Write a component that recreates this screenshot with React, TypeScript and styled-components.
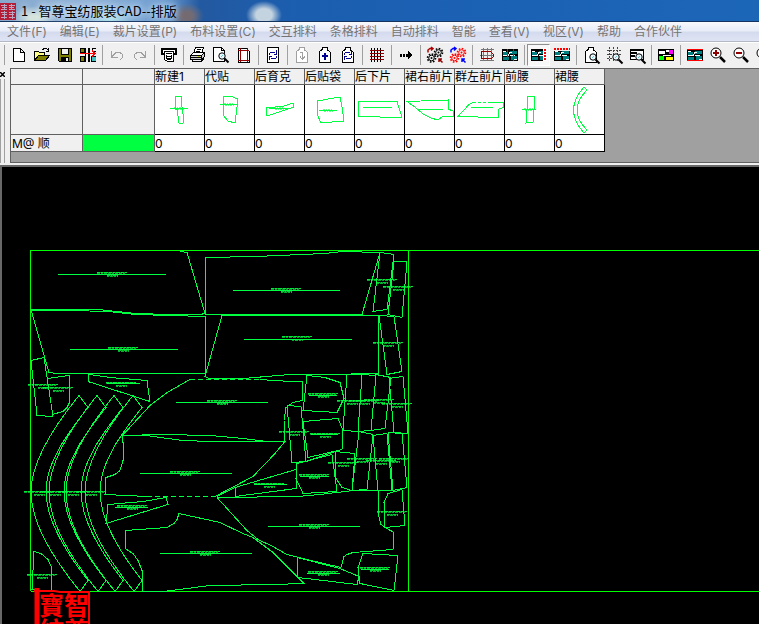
import React from "react";
import styled, { createGlobalStyle } from "styled-components";

const Global = createGlobalStyle`
  *{box-sizing:border-box}
  body{margin:0;background:#000;font:12px/16px Inter,"Noto Sans CJK SC",sans-serif;overflow:hidden}
`;
const Window = styled.div`display:flex;flex-direction:column;height:100vh;overflow:hidden;`;
const TitleBar = styled.header`
  display:flex;align-items:center;gap:5px;height:22px;flex:none;border-bottom:1px solid #14335f;color:#000;
  background:
    radial-gradient(ellipse 17px 13px at 187px 16px,#746b72 30%,transparent),
    radial-gradient(ellipse 18px 14px at 264px 15px,#c3d3df 45%,transparent),
    radial-gradient(ellipse 24px 10px at 110px 19px,#a4dce8 10%,transparent),
    radial-gradient(ellipse 22px 12px at 34px 18px,#d5e3dc 20%,transparent),
    linear-gradient(90deg,#86a9cd 0,#8fb2d8 90px,#6c9cd0 165px,#2359a0 200px,#1b5eb0 300px,#1c66b8 100%);
`;
const Title = styled.h1`margin:0;font:400 13px/20px "Noto Sans CJK SC",sans-serif;white-space:nowrap;text-shadow:0 0 6px #dcecff,0 0 8px #dcecff;`;
const MenuBar = styled.nav`
  display:flex;gap:13px;padding:0 7px;height:20px;flex:none;align-items:center;white-space:nowrap;
  background:linear-gradient(#f8f9fd 0,#e9edf8 45%,#d5dbee 55%,#dfe4f4 100%);border-bottom:1px solid #b4b7c4;
`;
const MenuItem = styled.button`
  border:0;padding:0;background:none;color:#747474;font:inherit;line-height:18px;
`;
const ToolBar = styled.div`
  display:flex;align-items:center;height:26px;flex:none;padding:0 0 1px 3px;background:#f0f0f0;border-top:1px solid #fff;overflow:hidden;
`;
const Grip = styled.span`width:2px;height:20px;margin-right:2px;flex:none;border-right:1px solid #a0a0a0;`;
const Tool = styled.button<{ $on?: boolean }>`
  display:flex;align-items:center;justify-content:center;width:23px;height:22px;flex:none;padding:0;
  border:1px solid;border-color:${p => (p.$on ? "#909090 #fff #fff #909090" : "transparent")};
  background:${p => (p.$on ? "#f8f8f8" : "none")};
  svg{display:block;overflow:visible}
`;
const Sep = styled.span`width:6px;height:20px;flex:none;display:flex;justify-content:center;
  &::before{content:"";width:1px;background:#a0a0a0}`;
const Panel = styled.section`display:flex;height:95px;flex:none;background:#f0f0f0;`;
const Dock = styled.div`width:10px;flex:none;display:flex;flex-direction:column;`;
const CloseBtn = styled.button`border:0;background:none;padding:2px 0 0 0;width:6px;height:11px;svg{display:block}`;
const DockGrip = styled.span`width:5px;flex:1;border:solid #a0a0a0;border-width:0 1px;`;
const Sheet = styled.div`flex:1;min-width:0;background:#a0a0a0;border:1px solid #606060;border-width:1px 0 1px 1px;overflow:hidden;`;
const Grid = styled.table`border-collapse:separate;border-spacing:0;table-layout:fixed;width:594px;`;
const Cell = styled.td<{ $kind: "head" | "pic" | "val" | "side" | "swatch" }>`
  padding:0;padding-left:${p => (p.$kind === "side" ? "1px" : "0")};
  overflow:hidden;white-space:nowrap;text-align:left;font-weight:400;line-height:15px;
  vertical-align:${p => (p.$kind === "pic" ? "top" : "middle")};
  height:${p => (p.$kind === "pic" ? "50px" : p.$kind === "head" ? "16px" : "17px")};
  border-right:1px solid ${p => (p.$kind === "pic" || p.$kind === "val" ? "#000" : "#606060")};
  border-bottom:1px solid ${p => (p.$kind === "pic" || p.$kind === "val" ? "#000" : "#606060")};
  background:${p => (p.$kind === "pic" || p.$kind === "val" ? "#fff" : p.$kind === "swatch" ? "#00ff40" : "#f0f0f0")};
  svg{display:block}
`;
const Col = styled.col<{ $w: number }>`width:${p => p.$w}px;`;
const Stage = styled.main`
  flex:1;min-height:0;background:#000;border:solid #686868;border-width:2px 0 0 2px;
  svg{display:block;width:100%;height:100%}
`;
const Gap = styled.div`height:2px;flex:none;background:#f0f0f0;`;
const Green = styled.g`fill:none;stroke:#00ff40;stroke-width:1px;shape-rendering:crispEdges;`;
const Seal = styled.text`font:700 25px "Noto Sans CJK TC",serif;fill:#f00;`;

const K = "#000";
const Teal = ({ red }: { red: string }) => (
  <>
    <path fill={K} d="M0 2h16v12H0z" />
    <path fill="#008080" d="M1 5h5v3H1zM8 4h7v3H8zM1 10h6v3H1zM9 9h6v4H9z" />
    <path stroke="#fff" fill="none" d="M1 8.5h5l2-3h2M8 8.5h5M1 4.5h3M12 12.5h3" />
    {red && <path stroke="#f00" fill="none" d={red} />}
  </>
);
const Lens = ({ x = 8, y = 8 }: { x?: number; y?: number }) => (
  <g transform={`translate(${x} ${y})`} shapeRendering="auto">
    <circle cx="2" cy="2" r="3.2" fill="#e8f8ff" stroke={K} />
    <path d="M4.5 4.5l4 4" stroke={K} strokeWidth="2" />
    <path d="M1 3l2-2" stroke="#6cc" />
  </g>
);
const Leaf = ({ c = K }: { c?: string }) => <path fill="#fff" stroke={c} d="M2.500 4.500L5 2.500V.5h5v2l3.500 3v10h-11z" />;
const Gears = ({ a, b, c }: { a: string; b: string; c: string }) => (
  <g shapeRendering="auto">
    {[[4.5, 11], [11.5, 5.5]].map(([x, y]) => (
      <g key={x} fill="none" stroke={a}>
        <circle cx={x} cy={y} r="4" strokeWidth="1.600" strokeDasharray="1.600 1.500" />
        <circle cx={x} cy={y} r="2.800" />
        <circle cx={x} cy={y} r="1" fill={a} stroke="none" />
      </g>
    ))}
    <path fill="none" stroke={b} strokeWidth="1.500" d="M1 5.500V3l2-1.500h2.500M4 0l2 1.500L4 3.500" />
    <path fill="none" stroke={c} strokeWidth="1.500" d="M15.500 15.500l-3-3M12 15v-3h3" />
  </g>
);
const Cycle = ({ c }: { c: string }) => (
  <g fill="none" stroke={c}>
    <path d="M5 5.500h5M4.500 6v2M11.500 3v4M9 7.500h3M6 11.500h5M11.500 9v2M4.500 9v4M4 9.500h3" />
  </g>
);

const icons: Record<string, React.ReactNode> = {
  新建: <path fill="#fff" stroke={K} d="M2.500 1.500h7l4 4v9h-11zM9.500 1.500v4h4" />,
  打开: (
    <>
      <path fill="#ff8" stroke={K} d="M.5 13.500v-9h4l1 1h5v3" />
      <path fill="#808000" stroke={K} d="M.5 13.500l4-5h11l-4 5z" />
      <path fill="none" stroke={K} d="M8.500 2.500l2-1h2l2 2M14.500 1v3h-3" />
    </>
  ),
  保存: (
    <>
      <path fill="#808000" stroke={K} d="M1.500 1.500h13v13h-12l-1-1z" />
      <path fill="#f0f0f0" stroke={K} d="M4.500 1.500h7v6h-7z" />
      <path fill={K} d="M4 10h8v5H4z" /><path fill="#f0f0f0" d="M9 11h2v3H9z" />
    </>
  ),
  对齐: (
    <>
      <path fill="#808000" stroke={K} d="M.5 1.500h4v4h-4zM.5 9.500h4v5h-4z" />
      <path fill="none" stroke={K} d="M5.500 1v14M8.500 1v14M9.500 1v14M15.500 1.500h-3v3h3" />
      <path fill="#40c0c0" d="M11 9h5v5h-5z" /><path fill="none" stroke={K} d="M15.500 9.500h-4v5h4" />
      <path stroke="#f00" fill="none" d="M0 6.500h15M12 3.500l3 3-3 3" />
    </>
  ),
  撤销: <path fill="none" stroke="#a0a0a0" d="M2.500 4v6h6M3 9.500l4-4h4l2.500 2v3l-3 3" />,
  重做: <path fill="none" stroke="#a0a0a0" d="M13.500 4v6h-6M13 9.500l-4-4H5l-2.500 2v3l3 3" />,
  绘图: (
    <>
      <path fill="#fff" stroke={K} strokeWidth="2" d="M1 2h14v5H1z" />
      <path fill="#fff" stroke={K} d="M3.500 4.500h9v10h-6l-3-2z" />
      <path fill="none" stroke={K} d="M5 6.500h6M5.500 8v3h5V8M6 9.500h4M6 12.500h4" />
    </>
  ),
  打印: (
    <>
      <path fill="#fff" stroke={K} d="M5.500.5h8l-2 6h-8z" />
      <path fill="none" stroke={K} d="M7 2.500h4M6 4.500h4" />
      <path fill="#fff" stroke={K} d="M.5 8.500l3-3h11l-3 3z" />
      <path fill="#ccc" stroke={K} d="M.5 8.500h11v4H.5zM11.500 8.500l3-3v4l-3 3" />
      <path fill="none" stroke={K} d="M2 12.500l1 2h8l3-3M1 10.500h10" /><path fill="#cc0" d="M8 9h2v1H8z" />
    </>
  ),
  预览: (
    <>
      <path fill="#fff" stroke={K} d="M.5.5h8l3 3v11H.5z" />
      <path fill="none" stroke={K} d="M8.500.5v3h3" /><Lens x={7} y={7} />
    </>
  ),
  页面: (
    <>
      <path fill="#fff" stroke={K} d="M2.500 1.500h8l3 3v11h-11z" />
      <path fill="none" stroke="#900000" d="M4.500 1v14M11.500 1v14M2 3.500h11M2 13.500h11" />
    </>
  ),
  刷新: <><path fill="#fff" stroke={K} d="M2.500.5h11v15h-11z" /><Cycle c="#000090" /></>,
  下页: <><Leaf c="#a0a0a0" /><path fill="none" stroke="#a0a0a0" d="M6 5.500h2.500V12M6 9.500l2.500 3 2.500-3" /></>,
  加页: <><Leaf /><path fill="none" stroke="#000090" strokeWidth="2" d="M8 6v7M5 9h6" /></>,
  换页: <><Leaf /><Cycle c="#000090" /></>,
  网格: <><path stroke={K} d="M2.500 1v14M5.500 1v14M8.500 1v14M11.500 1v14" /><path stroke="#900000" d="M1 3.500h14M1 6.500h14M1 9.500h14M1 12.500h14" /></>,
  箭头: <><path stroke={K} strokeWidth="3" strokeDasharray="2 1" d="M2 8h8" /><path fill={K} d="M10 4l5 4-5 4z" /></>,
  齿轮: <Gears a={K} b="#b00000" c="#900000" />,
  自动: <Gears a="#f00" b="#00f" c="#00f" />,
  框格: <><path stroke="#777" d="M2 2.500h13M4.500 1v13M8.500 1v13M12.500 1v13M1 13.500h14M1 8.500h14" /><path fill="none" stroke="#900000" d="M2.500 4.500h9l3 3v2l-2 2h-10z" /></>,
  排图一: <Teal red="M5.500 2v12M11.500 2v12" />,
  排图二: <><Teal red="" /><path fill="#fff" d="M12 1h4v13h-4z" /><path stroke="#f00" strokeWidth="2" strokeDasharray="2 1" d="M14 2v12" /></>,
  排图三: <><Teal red="" /><path fill="#f0f0f0" d="M0 1h16v3H0z" /><path stroke="#f00" strokeWidth="2" strokeDasharray="2 1" d="M0 2h16" /></>,
  查片: <><Leaf /><Lens /></>,
  查格: <><path stroke="#444" strokeDasharray="2 1" d="M1 3.500h14M1 7.500h14M1 11.500h9M3.500 0v14M7.500 0v14M11.500 0v14" /><Lens /></>,
  查表: <><path fill="#fff" stroke={K} d="M1.500 2.500h13v10h-13z" /><path stroke={K} strokeWidth="2" d="M1 3h14M2 6h6M2 9h4" /><Lens /></>,
  颜色: <><path fill={K} d="M0 2h16v12H0z" /><path fill="#fff" d="M1 4h6v3H1zM8 3h3v2H8z" /><path fill="#f0f" d="M11 3h4v4h-4z" /><path fill="#0f0" d="M1 9h5v4H1z" /><path fill="#ff0" d="M8 10h7v3H8z" /><path stroke="#fff" d="M5 8.500h8" /></>,
  排图四: <Teal red="M0 2.500h16M0 13.500h16" />,
  放大: <g shapeRendering="auto"><circle cx="6" cy="6" r="5" fill="#fff" stroke={K} /><path stroke={K} strokeWidth="2.500" d="M10 10l5 5" /><path stroke="#900000" strokeWidth="2" d="M3 6h6M6 3v6" /></g>,
  缩小: <g shapeRendering="auto"><circle cx="6" cy="6" r="5" fill="#fff" stroke={K} /><path stroke={K} strokeWidth="2.500" d="M10 10l5 5" /><path stroke="#900000" strokeWidth="2" d="M3 6h6" /></g>,
  全图: <g shapeRendering="auto"><circle cx="6" cy="6" r="5" fill="#fff" stroke={K} /><path stroke={K} strokeWidth="2.500" d="M10 10l5 5" /></g>,
};
const groups = [
  ["新建", "打开", "保存", "对齐"], ["撤销", "重做"], ["绘图"], ["打印", "预览", "页面"], ["刷新"], ["下页", "加页", "换页"],
  ["网格"], ["箭头"], ["齿轮", "自动"], ["框格", "排图一"], ["排图二", "排图三"], ["查片", "查格", "查表"], ["颜色"],
  ["排图四", "放大", "缩小", "全图"],
];
const menus = ["文件(F)", "编辑(E)", "裁片设置(P)", "布料设置(C)", "交互排料", "条格排料", "自动排料", "智能", "查看(V)", "视区(V)", "帮助", "合作伙伴"];

const Scribble = ({ x, y, w = 30 }: { x: number; y: number; w?: number }) => (
  <>
    <path opacity=".5" d={`M${x - w / 2} ${y + 0.5}h${w}M${x - 5} ${y + 3.5}h11`} />
    <path opacity=".8" strokeDasharray="3 1 2 1 4 1" d={`M${x - w / 2} ${y + 0.5}h${w}`} />
    <path opacity=".65" strokeDasharray="3 1 2 1 3 1" d={`M${x - w / 2} ${y + 1.5}h${w - 2}`} />
    <path opacity=".7" strokeDasharray="2 1 3 1" d={`M${x - 5} ${y + 4.5}h11`} />
    <path opacity=".6" strokeDasharray="3 1 1 1" d={`M${x - 5} ${y + 3.5}h11`} />
  </>
);
const Smudge = ({ x, y, w }: { x: number; y: number; w: number }) => (
  <>
    <path d={`M${x - w / 2} ${y + 0.5}h${w}`} />
    <path opacity=".6" strokeDasharray="2 1 1 1" d={`M${x - 5} ${y - 0.5}h10M${x - 4} ${y + 1.5}h10`} />
  </>
);

const pieces: { name: string; art: React.ReactNode }[] = [
  { name: "新建1", art: <><path d="M20 11h6l1 11 2 14-1 2h-4l-2-14h-2z" /><Smudge x={24} y={23} w={18} /></> },
  { name: "代贴", art: <><path d="M18 11h7l8 3-3 24-7-2-5-6z" /><Smudge x={24} y={19} w={18} /></> },
  { name: "后育克", art: <><path d="M11 23l18-2 9-3 1 4-27 9z" /><Smudge x={24} y={23} w={20} /></> },
  { name: "后贴袋", art: <><path d="M12 16l23-4 2 10 2 14-23 2-4-9z" /><Smudge x={23} y={25} w={18} /></> },
  { name: "后下片", art: <path d="M3 16.500h39l5 16-44-1zM8 22.500h29" /> },
  { name: "裙右前片", art: <path d="M2 16.500L43 15v9l5 2v5h-10l-5 4-7-2-8-4-8-7zM13 24.500h25" /> },
  { name: "群左前片", art: <><path d="M18 17.500l-4 2-11 12 40 1v-8l5-2v-5h-13M16 22.500h22" /><path strokeDasharray="3 2" d="M18 17.500h17" /></> },
  { name: "前腰", art: <><path d="M22 11l8 1-1 12-1 13-7 1 1-13z" /><Smudge x={24} y={24} w={14} /></> },
  { name: "裙腰", art: <path d="M29 2Q8 25 29 48l3-3Q12 25 32 5z" /> },
];

const outlines = [
  "180,251 187,252 205,313 200,314 170,314 135,313 117,311 98,309 31,309",
  "31,309 49,372 57,373 205,373 205,316 170,315 135,314 108,311 70,310 31,310",
  "31,360 44,357 53,416 37,415 31,360",
  "48,378 69,375 69,403 67,407 63,411 52,414",
  "90,374 88,374 88,381 150,401 147,380 110,377 90,374",
  "34,551 41,553 48,559 52,568 51,591 32,589 34,551",
  "205,314 205,257 256,256 325,253 343,251 380,252 362,314 205,314",
  "380,252 394,254 387,309 373,311 380,252",
  "394,261 407,261 402,317 388,314 394,261",
  "222,315 378,315 378,373 325,374 290,374 243,378 209,378 205,376 222,315",
  "379,315 394,316 402,371 387,374 379,315",
  "260,379 273,380 292,381 302,381 302,400 293,402 286,407 284,420 284,427 285,441 267,441 243,438 210,435 163,434 122,435 127,430 150,405 167,392 190,379",
  "122,435 147,435 160,437 183,440 210,441 285,441 275,453 253,476 215,496",
  "147,496 127,495 105,494 106,477 115,474 120,470 123,460 123,442 122,435",
  "108,504 143,501 166,497 168,504 106,523 108,504",
  "125,530 167,527 174,523 177,519 179,513 220,522 243,533 253,537 273,552 304,583 273,584 210,585 187,588 163,591 142,591 142,570 138,560 133,553 125,548 125,530",
  "217,497 298,496 320,494 353,490 378,490 378,513 381,524 387,528 394,532 393,549 353,552 347,554 344,556 341,567 311,560 287,554 273,546 258,539 247,530 217,497",
  "297,557 298,577 357,584 359,576 340,568 297,557",
  "363,553 398,555 394,590 360,583 358,567 363,553",
  "217,496 235,487 296,469 296,488 235,496 235,487",
  "297,463 332,454 337,491 303,493 296,478 297,463",
  "307,375 325,377 340,382 344,398 337,412 303,410 307,375",
  "303,421 338,418 343,430 342,449 308,457 303,421",
  "287,405 301,406 306,461 292,462 287,405",
  "347,374 362,374 358,431 343,430 347,374",
  "362,374 376,375 371,430 358,431 362,374",
  "376,374 391,377 385,428 371,430 376,374",
  "389,378 403,376 408,433 394,432 389,378",
  "306,461 335,451 355,453 352,490 342,487 336,478 335,451",
  "359,431 373,434 367,489 352,490 359,431",
  "373,435 387,433 392,490 378,490 373,435",
  "388,432 402,433 407,487 393,490 388,432",
  "402,489 405,525 385,527 384,502 388,493 402,489",
];
const grains = [
  [58, 166, 274], [70, 178, 349], [233, 340, 290], [244, 352, 339], [176, 268, 402], [140, 232, 473], [160, 252, 553],
  [268, 360, 526], [307, 340, 573], [254, 287, 484], [107, 140, 383], [115, 148, 507], [300, 329, 476], [309, 337, 395], [311, 338, 434], [361, 389, 569],
];
const notes = [
  [112, 272], [123, 347], [121, 382], [43, 384], [58, 387], [286, 288], [382, 279], [398, 286], [297, 336], [388, 342],
  [222, 400], [323, 393], [352, 400], [364, 400], [379, 399], [397, 403], [294, 431], [325, 433], [343, 462], [362, 458],
  [381, 460], [394, 458], [314, 474], [269, 483], [314, 524], [392, 511], [375, 567], [323, 571], [185, 471], [132, 505],
  [205, 551], [42, 574], [39, 491], [55, 491], [73, 491], [91, 491],
];
const waist = "M79 395C53 427 31 462 31 491C31 524 55 560 80 591L88 580C66 552 46 520 46 491C46 462 66 435 88 407Z";

export default function App() {
  return (
    <Window>
      <Global />
      <TitleBar>
        <svg width="16" height="18" viewBox="0 0 16 18" aria-hidden="true">
          <path fill="#b51c36" d="M0 1h16v17H0z" />
          <path fill="none" stroke="#b9a6c0" d="M1 3.500h6M2 5.500h5M4.500 2v6M1 7.500h6M9 3.500h6M9 5.500h5M11.500 2v6M9 7.500h6M1 10.500h6M2 12.500h5M4.500 9v8M1 15.500h6M9 10.500h6M9 12.500h5M12.500 9v8M9 15.500h6" />
        </svg>
        <Title>1 - 智尊宝纺服装CAD--排版</Title>
      </TitleBar>
      <MenuBar>{menus.map(m => <MenuItem key={m}>{m}</MenuItem>)}</MenuBar>
      <ToolBar role="toolbar">
        <Grip />
        {groups.map((g, i) => (
          <React.Fragment key={i}>
            {i > 0 && <Sep />}
            {g.map(n => (
              <Tool key={n} aria-label={n} $on={n === "排图二"}>
                <svg width="16" height="16" viewBox="0 0 16 16" shapeRendering="crispEdges">{icons[n]}</svg>
              </Tool>
            ))}
          </React.Fragment>
        ))}
      </ToolBar>
      <Panel>
        <Dock>
          <CloseBtn aria-label="关闭"><svg width="5" height="5" viewBox="0 0 5 5"><path d="M0 0l5 5M5 0L0 5" stroke="#000" strokeWidth="1.500" /></svg></CloseBtn>
          <DockGrip />
        </Dock>
        <Sheet>
          <Grid>
            <colgroup><Col $w={72} /><Col $w={72} />{pieces.map(p => <Col key={p.name} $w={50} />)}</colgroup>
            <thead>
              <tr>
                <Cell $kind="head" /><Cell $kind="head" />
                {pieces.map(p => <Cell as="th" scope="col" $kind="head" key={p.name}>{p.name}</Cell>)}
              </tr>
            </thead>
            <tbody>
              <tr>
                <Cell $kind="side" /><Cell $kind="side" />
                {pieces.map(p => (
                  <Cell $kind="pic" key={p.name}><svg width="49" height="49" viewBox="0 0 49 49"><Green>{p.art}</Green></svg></Cell>
                ))}
              </tr>
              <tr>
                <Cell $kind="side">M@ 顺</Cell><Cell $kind="swatch" />
                {pieces.map(p => <Cell $kind="val" key={p.name}>0</Cell>)}
              </tr>
            </tbody>
          </Grid>
        </Sheet>
      </Panel>
      <Gap />
      <Stage>
        <svg role="img" aria-label="排料图">
          <g transform="translate(-2 -167)">
            <Green>
              <g stroke="#00ff00">
                <path d="M30.500 250.500H4000M30.500 250v341M408.500 250v341M30.500 591.500H4000" />
              </g>
              <g transform="translate(0 .5)">
                {outlines.map(o => <polyline key={o} points={o} />)}
                {[0, 18, 35, 54].map(d => <path key={d} d={waist} transform={`translate(${d} 0)`} />)}
                <path strokeDasharray="5 3" d="M190 379h70M147 496h70" />
                {grains.map(([a, b, y]) => <path key={`${a}-${y}`} d={`M${a} ${y}H${b}`} />)}
              </g>
              {notes.map(([x, y]) => <Scribble key={`${x}-${y}`} x={x} y={y} />)}
            </Green>
            <path fill="none" stroke="#f00" strokeWidth="5" d="M37 588v40" />
            <path fill="none" stroke="#f00" strokeWidth="2" d="M34 591h20l6 1h29v40" />
            <Seal x="39" y="615">寶</Seal><Seal x="64" y="615">智</Seal>
            <Seal x="39" y="640">紡</Seal><Seal x="64" y="640">尊</Seal>
          </g>
        </svg>
      </Stage>
    </Window>
  );
}
